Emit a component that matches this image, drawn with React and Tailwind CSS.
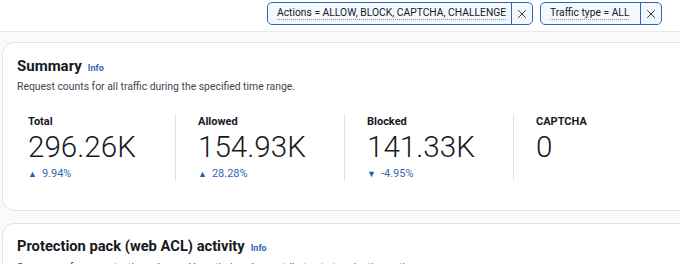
import { X } from 'lucide-react';

const METRICS = [
  { label: 'Total', value: '296.26K', change: '9.94%', up: true },
  { label: 'Allowed', value: '154.93K', change: '28.28%', up: true },
  { label: 'Blocked', value: '141.33K', change: '-4.95%', up: false },
  { label: 'CAPTCHA', value: '0', change: null },
];

function Token({ text, width }) {
  return (
    <div className="flex h-[23px] items-stretch rounded-[5px] border-[1.5px] border-[#2f67b8] bg-[#f2f8fd]" style={{ width }}>
      <div className="flex min-w-0 flex-1 items-center overflow-hidden pl-[9px]">
        <span className="whitespace-nowrap text-[10.3px] leading-none text-[#16191f] underline decoration-dotted decoration-[#8a93a0] underline-offset-[3px]">
          {text}
        </span>
      </div>
      <div className="flex w-[21px] shrink-0 items-center justify-center border-l-[1.5px] border-[#2f67b8]">
        <X size={14} strokeWidth={1.5} className="text-[#16191f]" />
      </div>
    </div>
  );
}

function InfoLink() {
  return <span className="ml-[6px] text-[9px] font-bold text-[#2f67b8]">Info</span>;
}

export default function App() {
  return (
    <div
      className="h-[264px] w-[680px] overflow-hidden bg-[#fafafa]"
      style={{ fontFamily: 'Roboto, "Open Sans", sans-serif' }}
    >
      {/* Filter tokens */}
      <div className="flex h-[32px] items-start gap-[7px] border-b border-[#e8e8e8] bg-white pl-[267px] pt-[2px]">
        <Token text="Actions = ALLOW, BLOCK, CAPTCHA, CHALLENGE" width="266px" />
        <Token text="Traffic type = ALL" width="122px" />
      </div>

      <div className="flex w-[740px] flex-col gap-[12px] pl-[2px] pt-[10px]">
        {/* Summary */}
        <div className="rounded-[12px] border border-[#e3e3e3] bg-white pb-[29px] pl-[14px] pt-[13px]">
          <div className="flex items-baseline">
            <h2 className="text-[15px] font-bold leading-[20px] text-[#16191f]">Summary</h2>
            <InfoLink />
          </div>
          <p className="mt-[3px] text-[10.4px] leading-[16px] text-[#414750]">
            Request counts for all traffic during the specified time range.
          </p>
          <div className="mt-[19px] flex pl-[11px]">
            {METRICS.map((m, i) => (
              <div
                key={m.label}
                className={i === 0 ? 'w-[147px] pt-[1px]' : 'w-[169px] border-l border-[#e3e3e3] pl-[22px] pt-[1px]'}
              >
                <div className="h-[66px]">
                  <div className="text-[11px] font-bold leading-[14px] text-[#16191f]">{m.label}</div>
                  <div className="text-[29.6px] font-light leading-[36px] text-[#16191f]">{m.value}</div>
                  {m.change && (
                    <div className="mt-[2px] flex items-center gap-[5px] text-[11px] leading-[14px] text-[#2f67b8]">
                      <span className="text-[9px] text-[#1f5fb5]">{m.up ? '▲' : '▼'}</span>
                      <span>{m.change}</span>
                    </div>
                  )}
                </div>
              </div>
            ))}
          </div>
        </div>

        {/* Protection pack */}
        <div className="rounded-[12px] border border-[#e3e3e3] bg-white pl-[14px] pt-[12px]">
          <div className="flex items-baseline">
            <h2 className="text-[14.7px] font-bold leading-[20px] text-[#16191f]">Protection pack (web ACL) activity</h2>
            <InfoLink />
          </div>
          <p className="mt-[4px] text-[10.4px] leading-[16px] text-[#414750]">
            Summary of your protection rules and how their order contributes to terminating actions.
          </p>
        </div>
      </div>
    </div>
  );
}
